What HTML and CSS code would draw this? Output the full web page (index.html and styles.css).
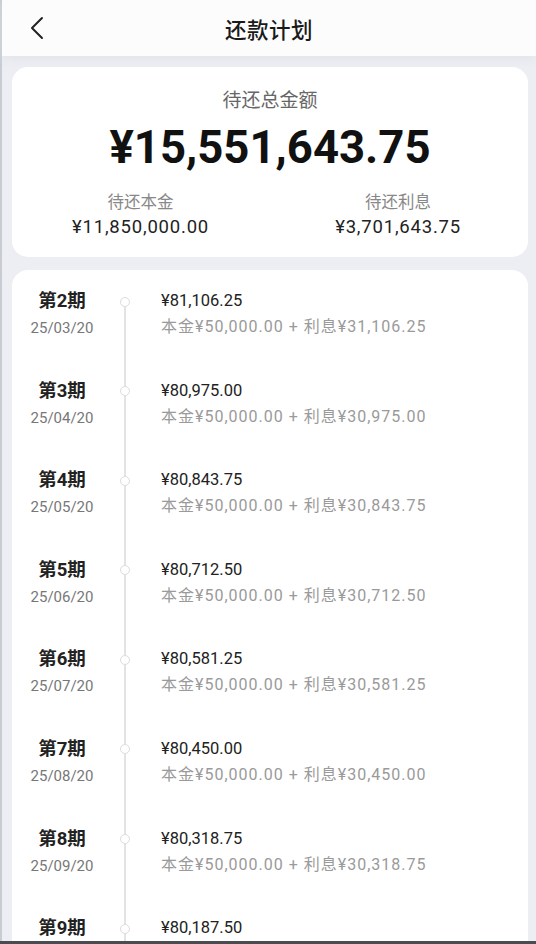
FILE: index.html
```html
<!DOCTYPE html>
<html lang="zh-CN">
<head>
<meta charset="utf-8">
<title>还款计划</title>
<link rel="stylesheet" href="styles.css">
</head>
<body>
<div class="page">
  <header class="header">
    <span class="back">
      <svg width="14" height="24" viewBox="0 0 14 24"><path d="M12 2 L2 12 L12 22" fill="none" stroke="#222" stroke-width="2" stroke-linecap="round" stroke-linejoin="round"/></svg>
    </span>
    <h1 class="title">还款计划</h1>
  </header>
  <main class="content">
    <section class="card summary">
      <div class="sum-label">待还总金额</div>
      <div class="sum-total">¥15,551,643.75</div>
      <div class="sum-split">
        <div class="split-col">
          <div class="split-label">待还本金</div>
          <div class="split-value">¥11,850,000.00</div>
        </div>
        <div class="split-col">
          <div class="split-label">待还利息</div>
          <div class="split-value">¥3,701,643.75</div>
        </div>
      </div>
    </section>
    <section class="card plan">
      <div class="row first">
        <div class="period"><div class="p-name">第2期</div><div class="p-date">25/03/20</div></div>
        <div class="tl"><span class="seg top"></span><span class="dot"></span><span class="seg bottom"></span></div>
        <div class="info"><div class="amt">¥81,106.25</div><div class="detail">本金¥50,000.00 + 利息¥31,106.25</div></div>
      </div>
      <div class="row">
        <div class="period"><div class="p-name">第3期</div><div class="p-date">25/04/20</div></div>
        <div class="tl"><span class="seg top"></span><span class="dot"></span><span class="seg bottom"></span></div>
        <div class="info"><div class="amt">¥80,975.00</div><div class="detail">本金¥50,000.00 + 利息¥30,975.00</div></div>
      </div>
      <div class="row">
        <div class="period"><div class="p-name">第4期</div><div class="p-date">25/05/20</div></div>
        <div class="tl"><span class="seg top"></span><span class="dot"></span><span class="seg bottom"></span></div>
        <div class="info"><div class="amt">¥80,843.75</div><div class="detail">本金¥50,000.00 + 利息¥30,843.75</div></div>
      </div>
      <div class="row">
        <div class="period"><div class="p-name">第5期</div><div class="p-date">25/06/20</div></div>
        <div class="tl"><span class="seg top"></span><span class="dot"></span><span class="seg bottom"></span></div>
        <div class="info"><div class="amt">¥80,712.50</div><div class="detail">本金¥50,000.00 + 利息¥30,712.50</div></div>
      </div>
      <div class="row">
        <div class="period"><div class="p-name">第6期</div><div class="p-date">25/07/20</div></div>
        <div class="tl"><span class="seg top"></span><span class="dot"></span><span class="seg bottom"></span></div>
        <div class="info"><div class="amt">¥80,581.25</div><div class="detail">本金¥50,000.00 + 利息¥30,581.25</div></div>
      </div>
      <div class="row">
        <div class="period"><div class="p-name">第7期</div><div class="p-date">25/08/20</div></div>
        <div class="tl"><span class="seg top"></span><span class="dot"></span><span class="seg bottom"></span></div>
        <div class="info"><div class="amt">¥80,450.00</div><div class="detail">本金¥50,000.00 + 利息¥30,450.00</div></div>
      </div>
      <div class="row">
        <div class="period"><div class="p-name">第8期</div><div class="p-date">25/09/20</div></div>
        <div class="tl"><span class="seg top"></span><span class="dot"></span><span class="seg bottom"></span></div>
        <div class="info"><div class="amt">¥80,318.75</div><div class="detail">本金¥50,000.00 + 利息¥30,318.75</div></div>
      </div>
      <div class="row">
        <div class="period"><div class="p-name">第9期</div><div class="p-date">25/10/20</div></div>
        <div class="tl"><span class="seg top"></span><span class="dot"></span><span class="seg bottom"></span></div>
        <div class="info"><div class="amt">¥80,187.50</div><div class="detail">本金¥50,000.00 + 利息¥30,187.50</div></div>
      </div>
    </section>
  </main>
  <div class="bottom-edge"></div>
</div>
</body>
</html>
```

FILE: styles.css
```css
* { box-sizing: border-box; }
html, body { margin: 0; padding: 0; }
body {
  background: #eceef3;
  font-family: Roboto, "Noto Sans CJK SC", sans-serif;
  color: #222;
  height: 944px;
  overflow: hidden;
}
.page {
  border-left: 2px solid #c9ccd3;
  min-height: 944px;
}
.header {
  height: 56px;
  background: #fcfcfd;
  display: flex;
  align-items: center;
  justify-content: center;
  position: relative;
  box-shadow: 0 3px 8px rgba(220,223,230,0.6);
}
.back {
  position: absolute;
  left: 28px;
  top: 16px;
  display: block;
  width: 14px;
  height: 24px;
}
.back svg { display: block; }
.title {
  margin: 0;
  font-family: "Noto Sans CJK SC", sans-serif;
  font-size: 21.5px;
  font-weight: 500;
  color: #1a1a1a;
  letter-spacing: 0.5px;
}
.content {
  padding: 11px 8px 0 10px;
  display: flex;
  flex-direction: column;
  gap: 13px;
}
.card {
  background: #fff;
  border-radius: 16px;
}
.summary {
  padding: 20px 0 18px;
  text-align: center;
  height: 190px;
}
.sum-label {
  font-family: "Noto Sans CJK SC", sans-serif;
  font-size: 19px;
  line-height: 24px;
  color: #666;
}
.sum-total {
  margin-top: 9px;
  font-size: 45.5px;
  line-height: 56px;
  font-weight: 700;
  color: #111;
}
.sum-split {
  margin-top: 14px;
  display: flex;
  justify-content: space-between;
  padding: 0 67px 0 60px;
}
.split-col { text-align: center; }
.split-label {
  font-family: "Noto Sans CJK SC", sans-serif;
  font-size: 16.5px;
  line-height: 22px;
  color: #888;
}
.split-value {
  margin-top: 3px;
  font-size: 18.5px;
  line-height: 24px;
  color: #222;
  letter-spacing: 0.8px;
}
.plan {
  display: flex;
  flex-direction: column;
  height: 700px;
  border-radius: 16px 16px 0 0;
}
.row {
  display: flex;
  height: 89.6px;
  flex: none;
}
.period {
  width: 100px;
  text-align: center;
  padding-top: 18px;
}
.p-name {
  font-size: 18.5px;
  line-height: 26px;
  font-weight: 700;
  color: #222;
}
.p-date {
  margin-top: 3px;
  font-size: 15px;
  line-height: 22px;
  color: #777;
}
.tl {
  width: 26px;
  display: flex;
  flex-direction: column;
  align-items: center;
}
.seg {
  width: 2px;
  background: #e3e3e3;
}
.seg.top { height: 26.5px; }
.seg.bottom { flex: 1; }
.first .seg.top { background: transparent; }
.dot {
  width: 10px;
  height: 10px;
  border-radius: 50%;
  border: 1.5px solid #dcdcdc;
  background: #fff;
  flex: none;
}
.info {
  padding-top: 18px;
  padding-left: 23px;
}
.amt {
  font-size: 16.5px;
  line-height: 26px;
  color: #222;
}
.detail {
  margin-top: 2px;
  font-size: 16px;
  line-height: 22px;
  color: #9a9a9a;
  letter-spacing: 1px;
}
.bottom-edge {
  position: fixed;
  left: 0;
  right: 0;
  bottom: 0;
  height: 3px;
  background: #4a4c50;
}
```
